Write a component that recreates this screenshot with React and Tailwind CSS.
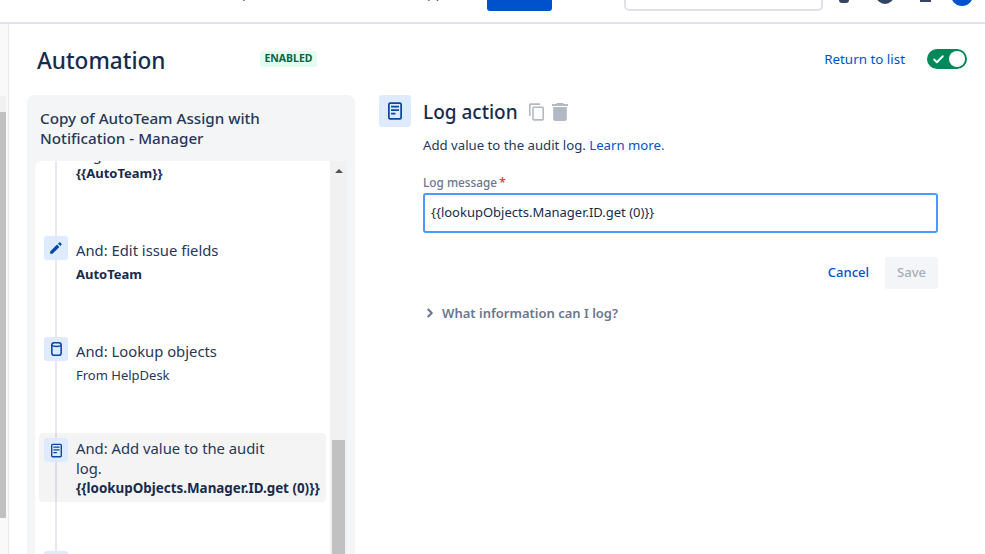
import React from "react";
import { Check, ChevronRight } from "lucide-react";

const LogIcon = ({ className }) => (
  <svg viewBox="0 0 16 20" className={className}>
    <path fillRule="evenodd" fill="currentColor" d="M2.5 0h11A2.5 2.5 0 0 1 16 2.5v15a2.5 2.5 0 0 1-2.5 2.5h-11A2.5 2.5 0 0 1 0 17.5v-15A2.5 2.5 0 0 1 2.5 0zM2 2.5V17.5a.5.5 0 0 0 .5.5h11a.5.5 0 0 0 .5-.5V2.5a.5.5 0 0 0-.5-.5h-11a.5.5 0 0 0-.5.5z" />
    <path fill="currentColor" d="M3.5 4h9v2h-9zM3.5 8h9v2h-9zM3.5 12h5v2h-5z" />
  </svg>
);

const DbIcon = ({ className }) => (
  <svg viewBox="0 0 14 18" className={className} fill="none" stroke="currentColor" strokeWidth="2">
    <rect x="1" y="1" width="12" height="16" rx="3" />
    <path d="M1 4.5c2 1.6 10 1.6 12 0" />
  </svg>
);

const PencilIcon = ({ className }) => (
  <svg viewBox="0 0 24 24" className={className} fill="currentColor">
    <path d="M2 18v4h4L17.8 10.2l-4-4L2 18zM21.4 6.6a1.4 1.4 0 0 0 0-2l-2-2a1.4 1.4 0 0 0-2 0l-2 2 4 4 2-2z" />
  </svg>
);

const Step = ({ icon, title, sub, subBold, rowClass, titleClass, subClass }) => (
  <div className={`relative flex gap-[8px] px-[5px] ${rowClass}`}>
    <div className="flex h-[24px] w-[24px] shrink-0 items-center justify-center rounded-[3px] bg-[#deebff] text-[#0747a6]">{icon}</div>
    <div className="min-w-0">
      <div className={`w-[205px] text-[14.8px] leading-[20px] text-[#253858] ${titleClass}`}>{title}</div>
      <div className={`whitespace-nowrap leading-[18px] ${subBold ? "font-bold text-[#172b4d]" : "text-[#253858]"} ${subClass}`}>{sub}</div>
    </div>
  </div>
);

export default function App() {
  return (
    <div className="flex h-[554px] w-[985px] flex-col overflow-hidden bg-white text-[#172b4d] [font-family:'Noto_Sans','Open_Sans',sans-serif]">
      <header className="relative z-10 flex h-[24px] shrink-0 items-start border-b-2 border-[#e2e4ea] bg-white">
        <div className="-mt-[20px] ml-[220px] w-[198px] text-[14px] leading-[24px] text-[#42526e]">Help</div>
        <div className="-mt-[20px] w-[69px] text-[14px] leading-[24px] text-[#42526e]">Apps</div>
        <div className="h-[11px] w-[65px] rounded-b-[3px] bg-[#0052cc]" />
        <div className="ml-[72px] h-[11px] w-[199px] rounded-b-[5px] border-2 border-t-0 border-[#dfe1e6]" />
        <div className="-mt-[13px] ml-[16px] h-[16px] w-[10px] rounded-[3px] bg-[#344563]" />
        <div className="-mt-[14px] ml-[27px] h-[18px] w-[18px] rounded-full bg-[#344563]" />
        <div className="ml-[26px] h-[2px] w-[11px] bg-[#344563]" />
        <div className="-mt-[16px] ml-[20px] h-[22px] w-[22px] rounded-full bg-[#0052cc]" />
      </header>

      <div className="flex min-h-0 flex-1">
        <aside className="flex w-[9px] shrink-0 flex-col border-r border-[#e9eaee] bg-[#f9f9fa] pt-[72px]">
          <div className="h-[16px] w-[6px] bg-[#f1f1f1]" />
          <div className="h-[406px] w-[6px] bg-[#c1c1c1]" />
        </aside>

        <main className="flex min-w-0 flex-1 flex-col">
          <div className="flex h-[71px] shrink-0 items-start pl-[28px] pr-[18px] pt-[18px]">
            <h1 className="mt-px w-[223px] text-[22.6px] font-medium leading-[36px] text-[#172b4d]">Automation</h1>
            <span className="mt-[9px] flex h-[16px] w-[57px] items-center justify-center rounded-[3px] bg-[#e3fcef] text-[10.5px] font-bold text-[#006644]">ENABLED</span>
            <a className="ml-auto mt-[7px] text-[13.4px] leading-[20px] text-[#0052cc]">Return to list</a>
            <div className="ml-[22px] mt-[7px] flex h-[20px] w-[40px] items-center justify-between rounded-full bg-[#00875a] pl-[5px] pr-[2px]">
              <Check size={13} strokeWidth={3.5} className="text-white" />
              <span className="h-[16px] w-[16px] rounded-full bg-white" />
            </div>
          </div>

          <div className="flex min-h-0 flex-1">
            <section className="ml-[18px] flex w-[328px] shrink-0 flex-col rounded-t-[8px] bg-[#f4f5f7]">
              <h2 className="px-[13px] pb-[13px] pt-[13px] text-[15.2px] font-medium leading-[20px] text-[#253858]">
                Copy of AutoTeam Assign with<br />Notification - Manager
              </h2>
              <div className="flex min-h-0 flex-1 pl-[8px] pr-[8px]">
                <div className="relative min-h-0 w-[295px] overflow-hidden rounded-tl-[6px] bg-white">
                  <div className="absolute bottom-0 left-[20px] top-0 w-[2px] bg-[#e6e8f1]" />
                  <div className="relative -mt-[17px] pl-[4px] pr-[4px]">
                    <div className="ml-[37px] text-[14.8px] leading-[20px] text-[#253858]">Log action</div>
                    <div className="ml-[37px] h-[72px] text-[13px] font-bold leading-[18px] text-[#172b4d]">{"{{AutoTeam}}"}</div>
                    <Step icon={<PencilIcon className="h-[14px] w-[14px]" />} title="And: Edit issue fields" sub="AutoTeam" subBold rowClass="h-[101px]" titleClass="mt-[4px]" subClass="mt-[5px] text-[13px]" />
                    <Step icon={<DbIcon className="h-[14px] w-[11px]" />} title="And: Lookup objects" sub="From HelpDesk" rowClass="h-[96px]" titleClass="mt-[4px]" subClass="mt-[5px] text-[13px]" />
                    <Step icon={<LogIcon className="h-[15px] w-[11px]" />} title={<>And: Add value to the audit<br />log.</>} sub={"{{lookupObjects.Manager.ID.get (0)}}"} subBold rowClass="h-[69px] rounded-[4px] bg-[#0000000b] pt-[5px]" titleClass="" subClass="mt-[1px] text-[13.4px]" />
                    <div className="h-[49px]" />
                    <div className="ml-[5px] h-[24px] w-[24px] rounded-[3px] bg-[#deebff]" />
                  </div>
                </div>
                <div className="flex w-[17px] shrink-0 flex-col bg-[#f1f1f1]">
                  <div className="flex h-[17px] shrink-0 items-center justify-center pt-[3px]">
                    <div className="h-0 w-0 border-x-[4px] border-b-[4px] border-x-transparent border-b-[#505050]" />
                  </div>
                  <div className="min-h-0 flex-1 overflow-hidden pt-[262px]">
                    <div className="ml-[2px] h-[120px] w-[13px] bg-[#c1c1c1]" />
                  </div>
                </div>
              </div>
            </section>

            <section className="ml-[24px] min-w-0 flex-1">
              <div className="flex">
                <div className="flex h-[32px] w-[32px] shrink-0 items-center justify-center rounded-[3px] bg-[#deebff] text-[#0747a6]">
                  <LogIcon className="h-[20px] w-[14px]" />
                </div>
                <div className="ml-[12px] flex h-[34px] items-center">
                  <h3 className="text-[19px] font-medium leading-[32px] text-[#172b4d]">Log action</h3>
                  <svg viewBox="2 1 19 22" className="ml-[11px] h-[18px] w-[15px] text-[#b3b9c4]" fill="currentColor"><path d="M16 1H4c-1.1 0-2 .9-2 2v14h2V3h12V1zm3 4H8c-1.1 0-2 .9-2 2v14c0 1.1.9 2 2 2h11c1.1 0 2-.9 2-2V7c0-1.1-.9-2-2-2zm0 16H8V7h11v14z" /></svg>
                  <svg viewBox="5 3 14 18" className="ml-[8px] h-[18px] w-[16px] text-[#b3b9c4]" fill="currentColor" preserveAspectRatio="none"><path d="M6 19c0 1.1.9 2 2 2h8c1.1 0 2-.9 2-2V7H6v12zM19 4h-3.5l-1-1h-5l-1 1H5v2h14V4z" /></svg>
                </div>
              </div>
              <div className="ml-[44px] w-[515px]">
                <p className="mt-[6px] text-[13.2px] leading-[20px] text-[#253858]">Add value to the audit log. <a className="text-[#0052cc]">Learn more.</a></p>
                <label className="mt-[19px] block text-[11.8px] font-medium leading-[16px] text-[#6b778c]">Log message<span className="ml-[2px] text-[#de350b]">*</span></label>
                <div className="mt-[3px] flex h-[40px] items-center rounded-[3px] border-2 border-[#4c9aff] bg-white px-[6px] text-[13px] text-[#172b4d]">{"{{lookupObjects.Manager.ID.get (0)}}"}</div>
                <div className="mt-[24px] flex items-center justify-end">
                  <a className="text-[13px] font-medium text-[#0052cc]">Cancel</a>
                  <button className="ml-[16px] h-[32px] w-[53px] rounded-[3px] bg-[#f4f5f7] text-[13px] font-medium text-[#a5adba]">Save</button>
                </div>
                <div className="mt-[14px] flex items-center text-[13px] font-semibold leading-[20px] text-[#6b778c]">
                  <ChevronRight size={14} strokeWidth={3.5} className="text-[#6b778c]" />
                  <span className="ml-[5px]">What information can I log?</span>
                </div>
              </div>
            </section>
          </div>
        </main>
      </div>
    </div>
  );
}
